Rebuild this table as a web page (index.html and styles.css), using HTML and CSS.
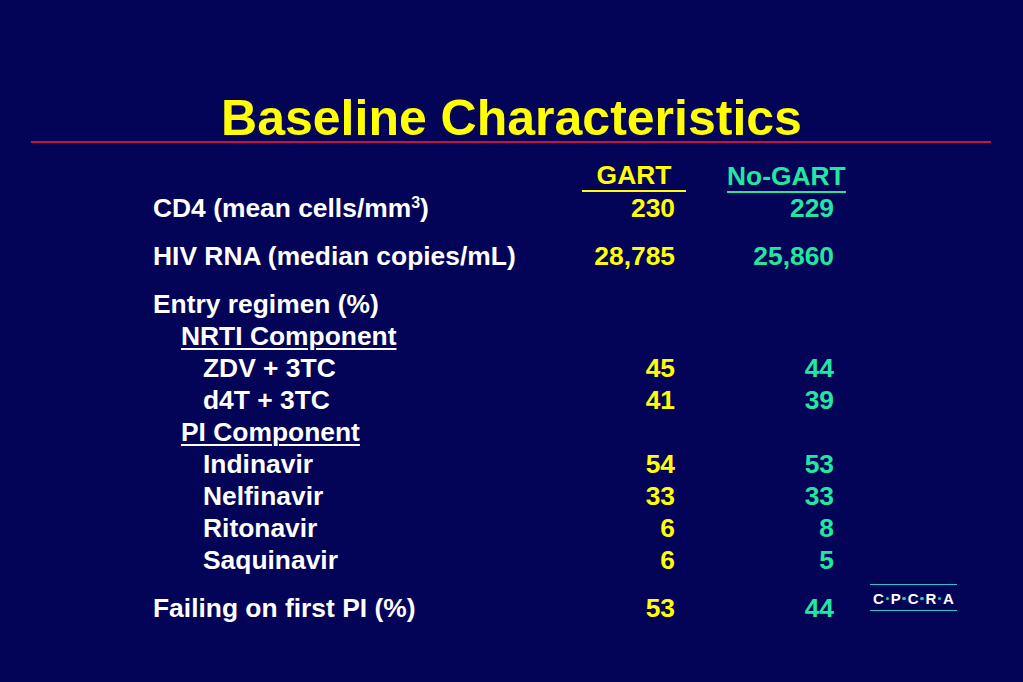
FILE: index.html
```html
<!DOCTYPE html>
<html lang="en">
<head>
<meta charset="utf-8">
<title>Baseline Characteristics</title>
<link rel="stylesheet" href="styles.css">
</head>
<body>
<div class="slide">
  <h1 class="title">Baseline Characteristics</h1>
  <div class="rule"></div>

  <div class="table">
    <div class="row head">
      <div class="label"></div>
      <div class="val gart"><span class="hdr">GART</span></div>
      <div class="val nogart"><span class="hdr">No-GART</span></div>
    </div>
    <div class="row">
      <div class="label">CD4 (mean cells/mm<sup class="sup">3</sup>)</div>
      <div class="val gart">230</div>
      <div class="val nogart">229</div>
    </div>

    <div class="row gap">
      <div class="label">HIV RNA (median copies/mL)</div>
      <div class="val gart">28,785</div>
      <div class="val nogart">25,860</div>
    </div>

    <div class="row gap">
      <div class="label">Entry regimen (%)</div>
      <div class="val gart"></div>
      <div class="val nogart"></div>
    </div>
    <div class="row">
      <div class="label l1"><span class="u">NRTI Component</span></div>
      <div class="val gart"></div>
      <div class="val nogart"></div>
    </div>
    <div class="row">
      <div class="label l2">ZDV + 3TC</div>
      <div class="val gart">45</div>
      <div class="val nogart">44</div>
    </div>
    <div class="row">
      <div class="label l2">d4T + 3TC</div>
      <div class="val gart">41</div>
      <div class="val nogart">39</div>
    </div>
    <div class="row">
      <div class="label l1"><span class="u">PI Component</span></div>
      <div class="val gart"></div>
      <div class="val nogart"></div>
    </div>
    <div class="row">
      <div class="label l2">Indinavir</div>
      <div class="val gart">54</div>
      <div class="val nogart">53</div>
    </div>
    <div class="row">
      <div class="label l2">Nelfinavir</div>
      <div class="val gart">33</div>
      <div class="val nogart">33</div>
    </div>
    <div class="row">
      <div class="label l2">Ritonavir</div>
      <div class="val gart">6</div>
      <div class="val nogart">8</div>
    </div>
    <div class="row">
      <div class="label l2">Saquinavir</div>
      <div class="val gart">6</div>
      <div class="val nogart">5</div>
    </div>

    <div class="row gap">
      <div class="label">Failing on first PI (%)</div>
      <div class="val gart">53</div>
      <div class="val nogart">44</div>
    </div>
  </div>

  <div class="logo">
    <span class="lt">C</span><span class="dot"></span><span class="lt">P</span><span class="dot"></span><span class="lt">C</span><span class="dot"></span><span class="lt">R</span><span class="dot"></span><span class="lt">A</span>
  </div>
</div>
</body>
</html>
```

FILE: styles.css
```css
html, body {
  margin: 0;
  padding: 0;
}

body {
  background: #030357;
  font-family: "Liberation Sans", Arial, sans-serif;
  font-weight: bold;
  color: #ffffff;
}

.slide {
  position: relative;
  width: 1023px;
  height: 682px;
  overflow: hidden;
}

.title {
  margin: 0;
  padding-top: 95px;
  font-size: 50px;
  line-height: 46px;
  font-weight: bold;
  color: #ffff00;
  text-align: center;
}

.rule {
  height: 2px;
  margin: 0 32px 0 31px;
  background: #c8143c;
}

.table {
  margin-top: 17px;
  padding-left: 153px;
  font-size: 26.4px;
  line-height: 32px;
}

.row {
  display: grid;
  grid-template-columns: 429px 104px 159px;
  height: 32px;
}

.row.gap {
  margin-top: 16px;
}

.label {
  white-space: nowrap;
}

.l1 {
  padding-left: 28px;
}

.l2 {
  padding-left: 50px;
}

.u {
  text-decoration: underline;
  text-decoration-thickness: 2px;
  text-underline-offset: 3px;
}

.sup {
  font-size: 16px;
  line-height: 0;
  vertical-align: 9px;
}

.val {
  text-align: right;
  padding-right: 11px;
  white-space: nowrap;
}

.gart {
  color: #ffff00;
}

.nogart {
  color: #22e6a2;
}

.head .val {
  padding-right: 0;
}

.head .gart {
  text-align: center;
}

.head .nogart {
  text-align: left;
  padding-left: 41px;
}

.hdr {
  display: inline-block;
  padding-top: 1px;
  line-height: 29px;
  border-bottom: 2px solid currentColor;
}

.head .gart .hdr {
  display: block;
}

.logo {
  position: absolute;
  left: 870px;
  top: 584px;
  width: 87px;
  height: 24px;
  border-top: 1px solid #2cc6c8;
  border-bottom: 1px solid #2cc6c8;
  display: flex;
  justify-content: center;
  align-items: center;
  padding-top: 1px;
  font-size: 15px;
  line-height: 15px;
  color: #ffffff;
}

.logo .dot {
  width: 3.5px;
  height: 3.5px;
  margin: 1px 1.7px 0;
  border-radius: 50%;
  background: #22d6b0;
}
```
